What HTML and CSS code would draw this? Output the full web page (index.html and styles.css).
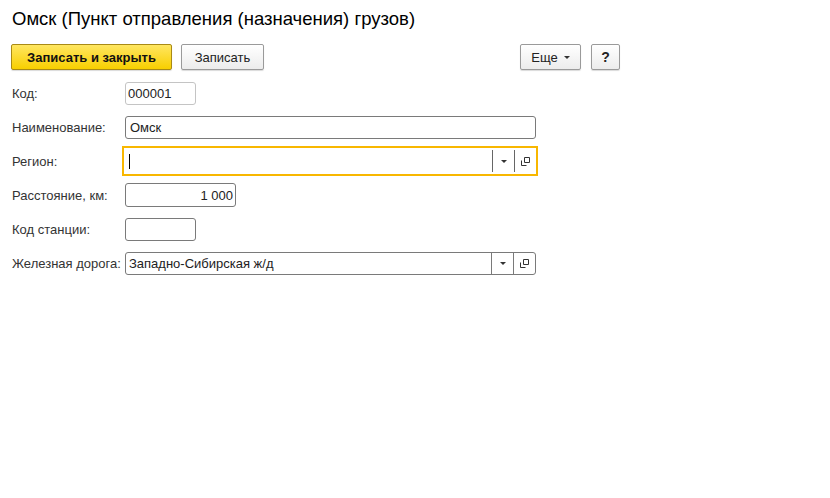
FILE: index.html
```html
<!DOCTYPE html>
<html lang="ru">
<head>
<meta charset="utf-8">
<link rel="stylesheet" href="styles.css">
</head>
<body>
<div class="page">
  <h1 class="title">Омск (Пункт отправления (назначения) грузов)</h1>
  <div class="toolbar">
    <div class="tb-left">
      <button class="btn btn-default">Записать и закрыть</button>
      <button class="btn btn-plain">Записать</button>
    </div>
    <div class="tb-right">
      <button class="btn btn-more">Еще <span class="tri"></span></button>
      <button class="btn btn-help">?</button>
    </div>
  </div>
  <div class="form">
    <div class="lbl">Код:</div>
    <div class="cell"><div class="field f-code ro">000001</div></div>

    <div class="lbl">Наименование:</div>
    <div class="cell"><div class="field f-wide">Омск</div></div>

    <div class="lbl">Регион:</div>
    <div class="cell">
      <div class="field f-wide combo focused">
        <span class="val"><span class="caret"></span></span>
        <span class="cbtn"><span class="tri"></span></span>
        <span class="cbtn"><svg width="9" height="9" viewBox="0 0 9 9"><path d="M3.5 0.5h5v5h-5z M0.5 3.5v5h5" fill="none" stroke="#333" stroke-width="1"/></svg></span>
      </div>
    </div>

    <div class="lbl">Расстояние, км:</div>
    <div class="cell"><div class="field f-num">1 000</div></div>

    <div class="lbl">Код станции:</div>
    <div class="cell"><div class="field f-code"></div></div>

    <div class="lbl">Железная дорога:</div>
    <div class="cell">
      <div class="field f-wide combo">
        <span class="val">Западно-Сибирская ж/д</span>
        <span class="cbtn"><span class="tri"></span></span>
        <span class="cbtn"><svg width="9" height="9" viewBox="0 0 9 9"><path d="M3.5 0.5h5v5h-5z M0.5 3.5v5h5" fill="none" stroke="#333" stroke-width="1"/></svg></span>
      </div>
    </div>
  </div>
</div>
</body>
</html>
```

FILE: styles.css
```css
* { box-sizing: border-box; }
html, body { margin: 0; padding: 0; background: #fff; }
body {
  font-family: Arial, "Liberation Sans", sans-serif;
  font-size: 13px;
  color: #333;
  width: 830px;
  height: 498px;
  overflow: hidden;
}
.page { padding: 0 12px; }
.title {
  margin: 0;
  padding-top: 8px;
  font-size: 18.5px;
  font-weight: normal;
  line-height: 22px;
  color: #000;
}
.toolbar {
  display: flex;
  width: 608px;
  justify-content: space-between;
  margin-top: 14px;
}
.tb-left, .tb-right { display: flex; gap: 9px; }
.tb-left { margin-left: -1px; }
.tb-right { gap: 10px; }
.btn {
  height: 26px;
  padding: 0 14px;
  font-family: Arial, "Liberation Sans", sans-serif;
  font-size: 13px;
  color: #222;
  border: 1px solid #9a9a9a;
  border-radius: 2px;
  background: linear-gradient(#ffffff, #ececec);
  box-shadow: 0 1px 1px rgba(0,0,0,0.15);
  display: flex;
  align-items: center;
  justify-content: center;
}
.btn-default {
  width: 161px;
  font-weight: bold;
  color: #111;
  background: linear-gradient(#ffe661, #f8cf00);
  border-color: #a98a15;
}
.btn-plain { width: 83px; }
.btn-more { width: 61px; padding: 0 10px; gap: 6px; }
.btn-help { width: 29px; padding: 0; font-weight: bold; font-size: 14px; }
.tri {
  display: inline-block;
  width: 0; height: 0;
  border-left: 3px solid transparent;
  border-right: 3px solid transparent;
  border-top: 3px solid #333;
}
.form {
  display: grid;
  grid-template-columns: 113px auto;
  grid-auto-rows: 34px;
  margin-top: 6px;
}
.lbl {
  display: flex;
  align-items: center;
  color: #333;
}
.cell { display: flex; align-items: center; }
.field {
  height: 23px;
  border: 1px solid #7a7a7a;
  border-radius: 3px;
  background: #fff;
  padding: 0 4px;
  display: flex;
  align-items: center;
  color: #222;
}
.field.ro { border-color: #c4c4c4; padding: 0 2px; }
.f-code { width: 71px; }
.f-num { width: 111px; justify-content: flex-end; padding: 0 2px; height: 24px; }
.f-wide { width: 411px; }
.combo { padding: 0; }
.combo .val { flex: 1; padding: 0 3px; display: flex; align-items: center; height: 100%; }
.combo .cbtn {
  width: 22px;
  height: 100%;
  border-left: 1px solid #7a7a7a;
  display: flex;
  align-items: center;
  justify-content: center;
}
.focused {
  width: 416px;
  height: 30px;
  margin-left: -3px;
  border: 2px solid #f8b700;
  border-radius: 0;
}
.focused .val { padding-left: 5px; }
.focused .cbtn { height: 22px; border-left-color: #666; }
.caret { display: inline-block; width: 1px; height: 15px; background: #000; }
```
